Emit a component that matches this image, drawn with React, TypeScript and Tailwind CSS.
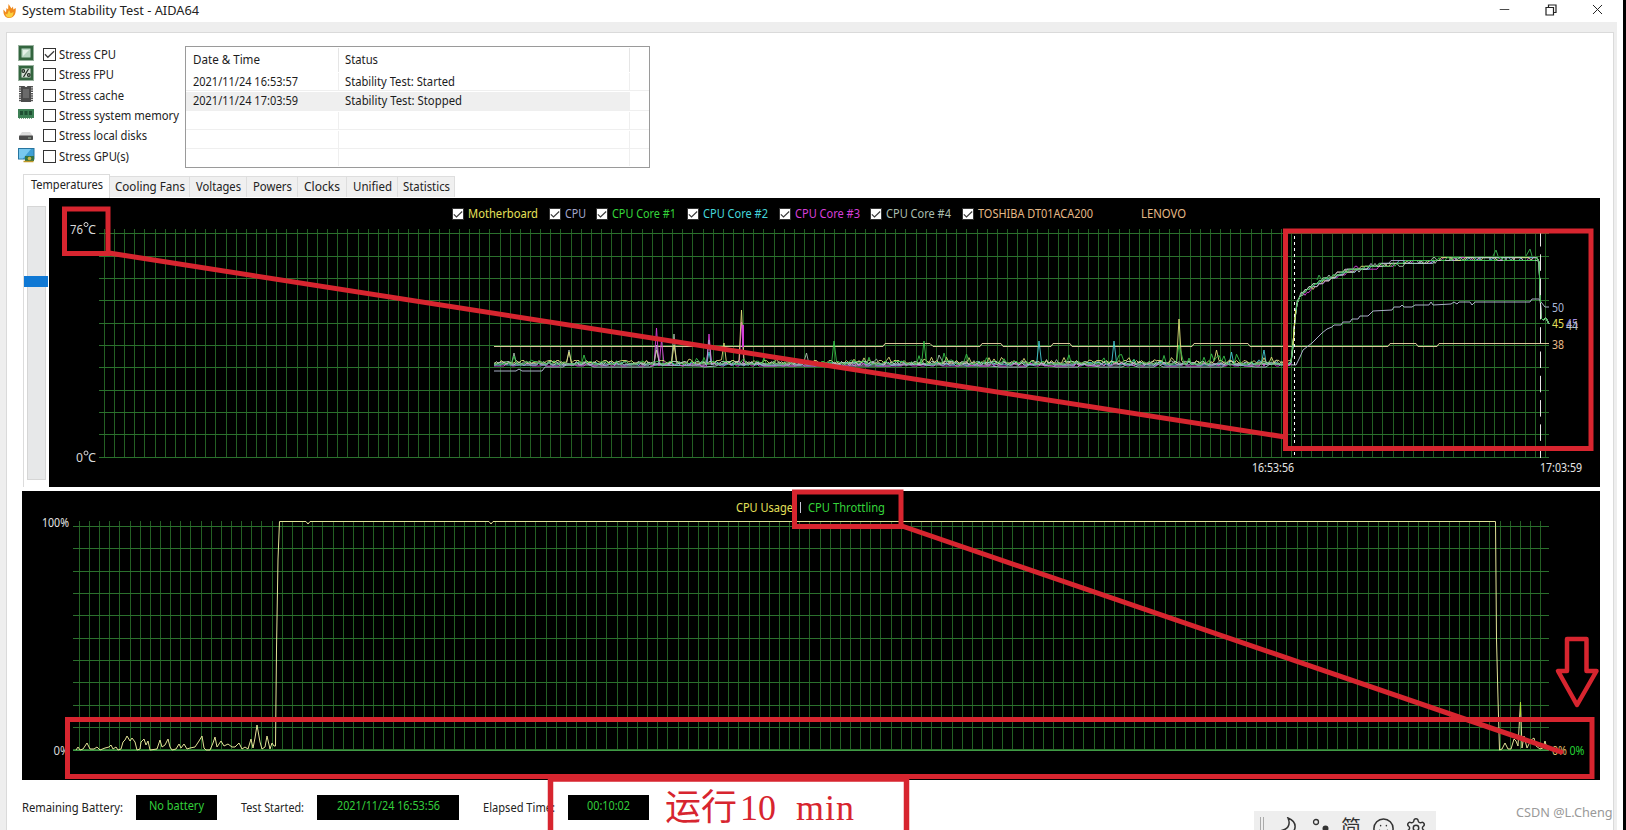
import type { ReactNode } from "react";
import { Minus, Settings, Smile, X } from "lucide-react";

type Point = [number, number];

const RED = "#d7252f";
const GRID_V = "#235f23";
const GRID_H = "#2b702d";
const FONT = "'Noto Sans', 'Open Sans', sans-serif";

const stressTests = [
  { label: "Stress CPU", width: "w-[57px]", checked: true, icon: <CpuIcon /> },
  { label: "Stress FPU", width: "w-[55px]", checked: false, icon: <CpuIcon percent /> },
  { label: "Stress cache", width: "w-[65px]", checked: false, icon: <CacheIcon /> },
  { label: "Stress system memory", width: "w-[120px]", checked: false, icon: <MemoryIcon /> },
  { label: "Stress local disks", width: "w-[88px]", checked: false, icon: <DiskIcon /> },
  { label: "Stress GPU(s)", width: "w-[70px]", checked: false, icon: <GpuIcon /> },
];

const tabs = [
  { label: "Cooling Fans", width: "w-[80px]", textWidth: "w-[70px]" },
  { label: "Voltages", width: "w-[57px]", textWidth: "w-[45px]" },
  { label: "Powers", width: "w-[51px]", textWidth: "w-[39px]" },
  { label: "Clocks", width: "w-[49px]", textWidth: "w-[36px]" },
  { label: "Unified", width: "w-[51px]", textWidth: "w-[39px]" },
  { label: "Statistics", width: "w-[57px]", textWidth: "w-[47px]" },
];

const sensors = [
  { label: "Motherboard", className: "w-[96.5px] text-[#e6e05a]", textWidth: "w-[70px]" },
  { label: "CPU", className: "w-[47.5px] text-[#a3a6cc]", textWidth: "w-[21px]" },
  { label: "CPU Core #1", className: "w-[91px] text-[#35d43a]", textWidth: "w-[64px]" },
  { label: "CPU Core #2", className: "w-[91.5px] text-[#45d5da]", textWidth: "w-[65px]" },
  { label: "CPU Core #3", className: "w-[91.5px] text-[#d63fd8]", textWidth: "w-[65px]" },
  { label: "CPU Core #4", className: "w-[91.5px] text-[#a9bdae]", textWidth: "w-[65px]" },
  { label: "TOSHIBA DT01ACA200", className: "w-[179px] text-[#e6b987]", textWidth: "w-[115px]" },
];

const logRows = [
  { time: "2021/11/24 16:53:57", status: "Stability Test: Started", selected: false },
  { time: "2021/11/24 17:03:59", status: "Stability Test: Stopped", selected: true },
  { time: "", status: "", selected: false },
  { time: "", status: "", selected: false },
];

const toPath = (points: Point[]) => points.map(([x, y]) => `${x},${y}`).join(" ");

function random(seed: number) {
  let s = seed;
  return () => {
    s = (s * 16807) % 2147483647;
    return s / 2147483647;
  };
}

// heavy load curve shared by all cores
const loadCurve: Point[] = [
  [1293, 345], [1296, 306], [1299, 299], [1302, 294], [1308, 290], [1315, 286], [1326, 279],
  [1345, 272], [1360, 269], [1380, 265], [1400, 263], [1430, 261.5], [1442, 259.5], [1538, 258.5],
];

function loadAt(x: number) {
  for (let i = 1; i < loadCurve.length; i++) {
    const [x0, y0] = loadCurve[i - 1];
    const [x1, y1] = loadCurve[i];
    if (x <= x1) return y0 + ((y1 - y0) * (x - x0)) / (x1 - x0);
  }
  return 258.5;
}

function coreTrace(seed: number, base: number, noise: number, spikes: Point[]): Point[] {
  const rnd = random(seed);
  const points: Point[] = [];
  for (let x = 494; x < 1291; x += 2.5) {
    const spike = spikes.find((s) => Math.abs(s[0] - x) < 1.3);
    const busy = x < 640 ? 0.35 : x < 840 ? 0.7 : 1;
    const r = rnd();
    const bump = r > 0.86 ? noise * rnd() * busy : r > 0.6 ? 2.5 : 0;
    points.push([x, spike ? spike[1] : base - bump]);
  }
  points.push([1291, base - 2]);
  // sensors report whole degrees, one degree is 2.9px
  let drift = 0;
  for (let x = 1293; x <= 1538; x += 2) {
    const r = rnd();
    if (r > 0.7) drift = (rnd() - 0.4) * 4.5;
    const level = Math.round((loadAt(x) + drift) / 2.9);
    points.push([x, level * 2.9 - 0.5]);
  }
  points.push([1539, 262], [1541, 318], [1543, 320], [1546, 318], [1549, 324]);
  return points;
}

const cores = [
  { color: "#a9bdae", points: coreTrace(41, 364, 5, [[513, 353], [568, 350], [675, 334], [807, 353], [940, 355]]) },
  { color: "#d63fd8", points: coreTrace(77, 366, 3, [[657, 328], [661, 340], [710, 334], [742, 322]]) },
  { color: "#45c9d2", points: coreTrace(133, 365, 6, [[710, 352], [1039, 341], [1114, 341], [1265, 350], [1231, 352]]) },
  { color: "#dfdc7a", points: coreTrace(937, 363, 6, [[568, 352], [657, 350], [675, 345], [724, 343], [742, 310], [1180, 319], [1217, 350]]) },
  { color: "#b3a7d0", points: coreTrace(1201, 365, 2, [[657, 345], [710, 340]]) },
  { color: "#b9cdbf", points: coreTrace(2203, 364, 3, []) },
  { color: "#35c24a", points: coreTrace(519, 364, 11, [[515, 356], [584, 355], [834, 341], [925, 341], [1180, 345]]) },
];

const cpuTrace: Point[] = [
  [494, 371], [516, 371], [519, 369], [522, 371], [542, 371], [545, 367], [563, 367], [566, 365], [590, 365],
  [594, 367], [650, 367], [654, 365], [700, 366], [704, 367], [716, 366], [720, 364], [760, 364], [764, 366],
  [890, 366], [893, 365], [908, 365], [930, 364], [952, 363], [956, 366], [990, 366], [1000, 367], [1026, 367],
  [1030, 364], [1052, 366], [1056, 367], [1078, 367], [1081, 364], [1100, 367], [1122, 367], [1128, 364],
  [1138, 367], [1154, 367], [1158, 364], [1163, 367], [1180, 367], [1200, 367], [1222, 367], [1228, 364],
  [1256, 367], [1266, 367], [1270, 364], [1296, 365], [1300, 357], [1303, 350], [1312, 343], [1317, 338],
  [1322, 333], [1327, 329], [1332, 327], [1334, 325], [1341, 325], [1343, 322], [1350, 322], [1352, 319],
  [1358, 319], [1360, 316], [1368, 316], [1373, 311], [1392, 310], [1394, 307], [1400, 307], [1402, 305],
  [1404, 307], [1412, 307], [1415, 305], [1429, 305], [1431, 302], [1433, 305], [1451, 304], [1454, 302],
  [1457, 304], [1459, 302], [1470, 302], [1472, 305], [1475, 302], [1530, 302], [1532, 299], [1539, 299],
  [1541, 302], [1545, 307], [1549, 307],
];

const diskTrace: Point[] = [
  [494, 346.5], [883, 346.5], [885, 343.5], [930, 343.5], [933, 346.5], [980, 346.5], [982, 343.5], [1001, 343.5],
  [1003, 346.5], [1051, 346.5], [1053, 343.5], [1070, 343.5], [1072, 346.5], [1192, 346.5], [1194, 343.5],
  [1248, 343.5], [1250, 346.5], [1388, 346.5], [1390, 343.5], [1416, 343.5], [1418, 346.5], [1437, 346.5],
  [1439, 343.5], [1549, 343.5],
];

const usageTrace: Point[] = [
  [76, 751], [78, 748], [80, 751], [83, 750], [87, 744], [90, 750], [94, 750], [97, 748], [100, 751], [105, 749],
  [109, 748], [111, 746], [113, 750], [116, 748], [118, 751], [121, 750], [123, 743], [125, 741], [127, 737],
  [130, 742], [132, 739], [135, 743], [137, 751], [140, 750], [141, 743], [144, 740], [146, 746], [148, 742],
  [150, 751], [157, 750], [160, 741], [162, 748], [165, 746], [168, 740], [170, 748], [172, 751], [176, 750],
  [179, 745], [181, 749], [184, 745], [187, 750], [190, 749], [195, 748], [199, 742], [202, 737], [204, 749],
  [206, 751], [210, 751], [213, 744], [215, 738], [217, 748], [221, 742], [224, 747], [228, 745], [232, 748],
  [235, 748], [239, 744], [242, 750], [245, 748], [248, 750], [251, 740], [253, 749], [255, 739], [257, 726],
  [260, 743], [262, 750], [265, 748], [267, 737], [270, 750], [272, 744], [274, 747], [275.5, 747], [276.5, 650],
  [278, 560], [279.5, 522.5], [306, 522.5], [308, 525], [310, 522.5], [489, 522.5], [491, 525], [493, 522.5],
  [1495.5, 522.5], [1496.5, 640], [1498, 700], [1499.5, 751], [1502, 750], [1505, 744], [1508, 750], [1511, 750],
  [1514, 740], [1516, 742], [1518, 747], [1520.5, 703], [1522, 749], [1524, 737], [1527, 749], [1531, 741],
  [1534, 739], [1536, 747], [1540, 750], [1543, 749], [1545, 742], [1547, 750],
];

function CheckBox({ checked, size = "w-[13px] h-[13px]" }: { checked: boolean; size?: string }) {
  return (
    <span className={`${size} shrink-0 border border-[#333] bg-white flex items-center justify-center`}>
      {checked && (
        <svg viewBox="0 0 12 12" className="w-[11px] h-[11px]" fill="none" stroke="#3c3c3c" strokeWidth="1.4">
          <path d="M1 5.8l3.2 3.2L11 2.4" />
        </svg>
      )}
    </span>
  );
}

// chart label stretched to a fixed width
function Label({ x, y, w, fill, children }: { x: number; y: number; w: number; fill: string; children: ReactNode }) {
  return (
    <text x={x} y={y} textLength={w} lengthAdjust="spacingAndGlyphs" fontSize="12" fontFamily={FONT} fill={fill}>
      {children}
    </text>
  );
}

function Text({ children, width, className = "" }: { children: string; width: string; className?: string }) {
  return (
    <svg className={`${width} h-[18px] shrink-0 overflow-visible ${className}`}>
      <text x="0" y="13" textLength="100%" lengthAdjust="spacingAndGlyphs" fontSize="12.3" fontFamily={FONT} fill="currentColor">
        {children}
      </text>
    </svg>
  );
}

interface GridProps {
  left: number;
  first: number;
  count: number;
  top: number;
  firstRow: number;
  bottom: number;
}

function Grid({ left, first, count, top, firstRow, bottom }: GridProps) {
  return (
    <g shapeRendering="crispEdges">
      {Array.from({ length: count }, (_, i) => {
        const x = Math.floor(first + i * 10.148) + 0.5;
        return <line key={i} x1={x} x2={x} y1={top} y2={bottom} stroke={GRID_V} />;
      })}
      {Array.from({ length: 11 }, (_, i) => {
        const y = Math.floor(firstRow + i * 22.36) + 0.5;
        return <line key={i} x1={left} x2={1549} y1={y} y2={y} stroke={GRID_H} />;
      })}
    </g>
  );
}

function TemperatureChart() {
  return (
    <div className="relative w-[1551px] h-[289px] bg-black">
      <div className="flex items-center pl-[403px] pt-[8px] h-[24px]">
        {sensors.map((s) => (
          <div key={s.label} className={`flex items-center gap-1 ${s.className}`}>
            <CheckBox checked size="w-3 h-3" />
            <Text width={s.textWidth}>{s.label}</Text>
          </div>
        ))}
        <Text width="w-[45px]" className="text-[#e6b987]">LENOVO</Text>
      </div>
      <svg className="absolute inset-0" width="1551" height="289" viewBox="49 198 1551 289" fill="none">
        <Grid left={99} first={104.3} count={143} top={229} firstRow={233.7} bottom={458} />
        <Label x={70} y={233.5} w={13} fill="#d8d8d8">76</Label>
        <circle cx="86" cy="224.5" r="2" stroke="#d8d8d8" />
        <Label x={88} y={233.5} w={8} fill="#d8d8d8">C</Label>
        <Label x={76} y={461.5} w={7} fill="#d8d8d8">0</Label>
        <circle cx="86" cy="453" r="2" stroke="#d8d8d8" />
        <Label x={88} y={461.5} w={8} fill="#d8d8d8">C</Label>
        <polyline points={toPath(diskTrace)} stroke="#dcc69c" />
        <polyline points={toPath(cpuTrace)} stroke="#aab0c8" />
        {cores.map((c) => (
          <polyline key={c.color} points={toPath(c.points)} stroke={c.color} strokeWidth="0.9" />
        ))}
        <path d="M1493 256l3-6 2 6M1526 256l4-7 2 7M1317 280l2-5 2 4" stroke="#35a24a" />
        <path d="M743 347V325" stroke="#d63fd8" strokeWidth="2" />
        <path d="M1293 345L1295.500 310" stroke="#e6e05a" />
        <path d="M1294.5 230V458" stroke="#fff" strokeDasharray="3 3" />
        <path d="M1540.5 230V458" stroke="#e8e8e8" strokeDasharray="16.5 7.8" />
        <Label x={1552} y={312} w={12} fill="#a9b8d8">50</Label>
        <Label x={1552} y={327.5} w={12} fill="#e6e05a">45</Label>
        <Label x={1566} y={327.5} w={12} fill="#a58be0">45</Label>
        <Label x={1566} y={329.5} w={12} fill="#b9c4c9">44</Label>
        <Label x={1552} y={348.5} w={12} fill="#e6b987">38</Label>
        <Label x={1252} y={472} w={42} fill="#e4e4e4">16:53:56</Label>
        <Label x={1540} y={472} w={42} fill="#e4e4e4">17:03:59</Label>
      </svg>
    </div>
  );
}

function UsageChart() {
  return (
    <div className="w-[1578px] h-[289px] bg-black -ml-px">
      <svg width="1578" height="289" viewBox="22 492 1578 289" fill="none">
        <Grid left={73} first={79.3} count={145} top={522} firstRow={527.3} bottom={751} />
        <Label x={736} y={512.5} w={57} fill="#e6e05a">CPU Usage</Label>
        <path d="M800.5 503V514" stroke="#c8c8d8" />
        <Label x={808} y={512.5} w={77} fill="#35d43a">CPU Throttling</Label>
        <Label x={42} y={527.5} w={27} fill="#e4e4e4">100%</Label>
        <Label x={53.5} y={755.5} w={16} fill="#d8d8d8">0%</Label>
        <path d="M73 751.5H1549" stroke="#3f9a45" />
        <polyline points={toPath(usageTrace)} stroke="#e2e296" />
        <path d="M1520.5 703V716" stroke="#a8e030" />
        <Label x={1552} y={756} w={15} fill="#e2c070">0%</Label>
        <Label x={1569.5} y={756} w={15} fill="#25d035">0%</Label>
      </svg>
    </div>
  );
}

function LogList() {
  return (
    <div className="w-[465px] h-[122px] shrink-0 mt-[13px] border border-[#9a9a9a] bg-white text-[#1c1c1c]">
      <div className="flex h-[25px] pt-px">
        <div className="w-[153px] h-6 pl-[7px] pt-[3px] border-r border-[#e5e5e5]">
          <Text width="w-[67px]">Date &amp; Time</Text>
        </div>
        <div className="w-[291px] h-6 pl-[6px] pt-[3px] border-r border-[#e5e5e5]">
          <Text width="w-[33px]">Status</Text>
        </div>
      </div>
      {logRows.map((row, i) => (
        <div key={i} className="flex h-[19.3px] pt-px border-b border-[#efefef]">
          <div className={`w-[153px] pl-[7px] border-r border-[#efefef] ${row.selected ? "bg-[#efefef]" : ""}`}>
            {row.time && <Text width="w-[105px]">{row.time}</Text>}
          </div>
          <div className={`w-[291px] pl-[6px] border-r border-[#efefef] ${row.selected ? "bg-[#efefef]" : ""}`}>
            {row.status && <Text width={row.selected ? "w-[117px]" : "w-[110px]"}>{row.status}</Text>}
          </div>
        </div>
      ))}
      <div className="flex h-[17px]">
        <div className="w-[153px] border-r border-[#efefef]" />
        <div className="w-[291px] border-r border-[#efefef]" />
      </div>
    </div>
  );
}

function CpuIcon({ percent }: { percent?: boolean }) {
  return (
    <svg width="16" height="16" viewBox="0 0 16 16">
      <rect x="1" y="1" width="14" height="14" fill="#33653f" />
      <rect x=".5" y=".5" width="15" height="15" fill="none" stroke="#33653f" strokeDasharray="1 1" />
      <rect x="3.5" y="3.5" width="9" height="9" fill={percent ? "#d5dfd5" : "#b9d6c3"} />
      {percent ? (
        <g fill="none" stroke="#1e2a20" strokeWidth="1.200">
          <path d="M10.500 4l-5 8" />
          <circle cx="5.300" cy="6" r="1.300" />
          <circle cx="10.800" cy="10" r="1.300" />
        </g>
      ) : (
        <path d="M5 5h6L5 11z" fill="#e6f1e9" />
      )}
    </svg>
  );
}

function CacheIcon() {
  return (
    <svg width="16" height="16" viewBox="0 0 16 16">
      <path d="M3 0h3.500l1 1h1l1-1H13v16H3z" fill="#4c4c4c" />
      <path d="M2 0v16M14 0v16" stroke="#555" strokeWidth="2" strokeDasharray="1.500 .8" />
      <path d="M5 3h6v9H5z" fill="#6a6a6a" />
    </svg>
  );
}

function MemoryIcon() {
  return (
    <svg width="16" height="16" viewBox="0 0 16 16">
      <path d="M0 3h16v9H0z" fill="#3d8055" />
      <path d="M2 5h3v4H2zM6.500 5h3v4h-3zM11 5h3v4h-3z" fill="#1f4f33" />
      <path d="M1 12.500h14" stroke="#7aa587" strokeDasharray="1 1" />
    </svg>
  );
}

function DiskIcon() {
  return (
    <svg width="16" height="16" viewBox="0 0 16 16">
      <path d="M4 6h8l3 4H1z" fill="#dcdcdc" />
      <rect x="1" y="9.500" width="14" height="4.500" rx=".8" fill="#4b4b4b" />
      <path d="M10 12h3" stroke="#9db09d" />
    </svg>
  );
}

function GpuIcon() {
  return (
    <svg width="17" height="16" viewBox="0 0 17 16">
      <rect x=".5" y="1.500" width="15.500" height="10.500" fill="#3f9fd4" stroke="#27759f" />
      <path d="M1 2h12L5 11.500H1z" fill="#78c8ee" />
      <path d="M7 9h9v5H7z" fill="#367341" />
      <path d="M5.500 14.500h10" stroke="#c29a28" strokeWidth="1.500" />
      <circle cx="11.500" cy="11.500" r="1.800" fill="#c9b44a" />
    </svg>
  );
}

function FlameIcon() {
  return (
    <svg width="13" height="16" viewBox="0 0 13 16">
      <path d="M6.500 15C2 15 0 11.500.5 6.500l2.500 3L3.500 5l1.600 1.500L5.500 1l3 4.500L10 3.500l.3 3 2.400-1.500C13.200 11 11 15 6.500 15z" fill="#f08a1d" />
      <path d="M6.500 14.500c-2.500 0-4-1.500-4-4l1.700 1L6 7l1.600 3.300L10.500 9c0 3.500-1.500 5.500-4 5.500z" fill="#fbd03f" />
    </svg>
  );
}

function StatusBox({ width, textWidth, children }: { width: string; textWidth: string; children: string }) {
  return (
    <div className={`${width} h-[25px] bg-black text-[#33cf3b] flex justify-center pt-[2px]`}>
      <Text width={textWidth}>{children}</Text>
    </div>
  );
}

function ImeBar() {
  return (
    <div className="absolute left-[1254px] top-[811px] w-[182px] h-[19px] bg-[#eee] text-[#333] overflow-hidden">
      <div className="flex items-start pt-[6px] pl-[6px]">
        <div className="w-1 h-4 border-x border-[#aaa]" />
        <svg className="ml-[13px]" width="20" height="20" viewBox="0 0 20 20" fill="none" stroke="currentColor" strokeWidth="1.500">
          <path d="M11 1c3 7 0 12-9 13 3 4 14 5 16-3 .6-4-2-8-7-10z" />
        </svg>
        <svg className="ml-[15px]" width="18" height="18" viewBox="0 0 18 18">
          <circle cx="4" cy="5" r="2.500" fill="none" stroke="currentColor" strokeWidth="1.300" />
          <circle cx="13.500" cy="11.500" r="3" fill="currentColor" />
        </svg>
        <span className="ml-[11px] -mt-[1px] text-[20px] leading-[22px] font-['Noto_Sans_CJK_SC',sans-serif]">简</span>
        <Smile className="ml-[11px]" size={23} strokeWidth={1.6} />
        <Settings className="ml-[10px]" size={22} strokeWidth={1.6} />
      </div>
    </div>
  );
}

function Annotations() {
  return (
    <svg className="absolute inset-0 pointer-events-none" width="1626" height="830" fill="none" stroke={RED} strokeWidth="5">
      <rect x="64.500" y="209" width="43.500" height="44.500" />
      <path d="M109 253L1285 437" />
      <rect x="1285.500" y="231" width="305.500" height="217.500" />
      <rect x="794.500" y="492" width="106.500" height="34.500" />
      <path d="M902 526L1561 752" strokeLinecap="round" />
      <rect x="67.500" y="719.500" width="1524.500" height="57" />
      <path d="M550.500 830V779H906.500V830" strokeWidth="5.500" />
      <path d="M1567 639h19.500v32h10l-19.500 34-19-34h9z" strokeLinejoin="round" strokeWidth="4.500" />
      <g fill={RED} stroke="none" fontSize="36">
        <text x="665" y="819.500" fontFamily="'Noto Sans CJK SC', sans-serif">运行</text>
        <text x="740" y="819.500" fontFamily="'Liberation Serif', serif">10</text>
        <text x="796" y="819.500" fontFamily="'Liberation Serif', serif" textLength="58">min</text>
      </g>
    </svg>
  );
}

export default function App() {
  return (
    <div className="relative w-[1626px] h-[830px] overflow-hidden bg-white border-r-[3px] border-black font-['Noto_Sans',sans-serif]">
      <header className="h-[22px] flex items-center justify-between pl-[3px] pr-[17px] text-[#222]">
        <div className="flex items-center gap-[6px] -mt-px">
          <FlameIcon />
          <Text width="w-[177px]">System Stability Test - AIDA64</Text>
        </div>
        <div className="flex items-center -mt-[3px]">
          <Minus size={15} strokeWidth={1.3} />
          <svg className="ml-[33px]" width="12" height="12" viewBox="0 0 12 12" fill="none" stroke="currentColor" strokeWidth="1.200">
            <path d="M1 3.500h7.500V11H1zM3.500 3.500V1H11v7.500H8.500" />
          </svg>
          <X className="ml-[32px]" size={17} strokeWidth={1.4} />
        </div>
      </header>

      <div className="w-[1617px] h-[808px] bg-[#eeeeee] pl-[6px] pt-[10px] pr-[3px]">
        <main className="h-full bg-white border-l border-t border-r border-[#dadada] pl-[16px]">
          <div className="flex h-[141px]">
            <div className="w-[167px] shrink-0 pt-[11.5px] -ml-[5px]">
              {stressTests.map((t) => (
                <div key={t.label} className="flex items-center h-[20.3px] text-[#222]">
                  <div className="w-[24.5px] shrink-0 flex -mt-[3px]">{t.icon}</div>
                  <CheckBox checked={t.checked} />
                  <Text width={t.width} className="ml-[3px] mt-px">{t.label}</Text>
                </div>
              ))}
            </div>
            <LogList />
          </div>

          <nav className="flex items-end h-[24px] text-[#222]">
            <div className="w-[87px] h-[24px] pl-[7px] pt-[1px] border border-b-0 border-[#dcdcdc] bg-white">
              <Text width="w-[72px]">Temperatures</Text>
            </div>
            {tabs.map((t) => (
              <div key={t.label} className={`${t.width} h-[21px] mb-px pt-px flex justify-center bg-[#f0f0f0] border-r border-t border-[#dedede]`}>
                <Text width={t.textWidth}>{t.label}</Text>
              </div>
            ))}
          </nav>

          <div className="flex border-l border-[#dcdcdc]">
            <div className="w-[25px] h-[289px] shrink-0 flex justify-center pt-2">
              <div className="w-[19px] h-[274px] bg-[#e7e8e9] border border-[#d6d6d6] pt-[69px]">
                <div className="w-6 h-[11px] -ml-[4px] bg-[#0f78d4]" />
              </div>
            </div>
            <TemperatureChart />
          </div>

          <div className="pt-[4px]">
            <UsageChart />
          </div>

          <footer className="flex items-center pt-[15px] text-[#222]">
            <Text width="w-[101px]" className="-ml-px">Remaining Battery:</Text>
            <div className="ml-[13px]">
              <StatusBox width="w-[81px]" textWidth="w-[55px]">No battery</StatusBox>
            </div>
            <Text width="w-[63px]" className="ml-[24px]">Test Started:</Text>
            <div className="ml-[13px]">
              <StatusBox width="w-[142px]" textWidth="w-[103px]">2021/11/24 16:53:56</StatusBox>
            </div>
            <Text width="w-[72px]" className="ml-[24px]">Elapsed Time:</Text>
            <div className="ml-[13px]">
              <StatusBox width="w-[81px]" textWidth="w-[43px]">00:10:02</StatusBox>
            </div>
          </footer>
        </main>
      </div>

      <ImeBar />
      <Annotations />
      <span className="absolute left-[1516px] top-[802px] text-[12.7px] leading-5 text-[#999] whitespace-nowrap">
        CSDN @L.Cheng
      </span>
    </div>
  );
}
